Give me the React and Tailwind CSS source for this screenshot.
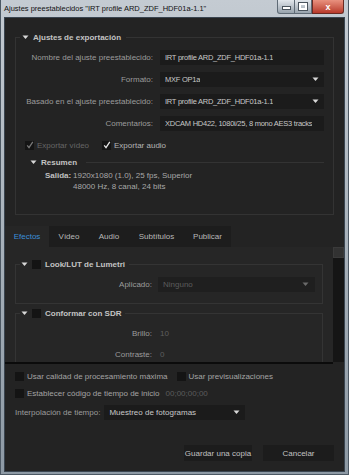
import React from "react";

const Tri = ({ dim }) => (
  <svg width="7" height="5" viewBox="0 0 7 5" className="shrink-0">
    <polygon points="0.5,0.5 6.5,0.5 3.5,4" fill={dim ? "#6a6a6a" : "#d8d8d8"} />
  </svg>
);

const Check = ({ checked, dim }) => (
  <span className="w-[9px] h-[9px] bg-[#141414] flex items-center justify-center shrink-0">
    {checked && (
      <svg width="8" height="8" viewBox="0 0 8 8">
        <path d="M1.2 4.4 L3 6.6 L6.8 0.8" fill="none" stroke={dim ? "#777" : "#e6e6e6"} strokeWidth="1.3" />
      </svg>
    )}
  </span>
);

const Row = ({ label, value, arrow }) => (
  <div className="flex items-center h-[15px] min-w-0">
    <span className="w-[137px] shrink-0 text-right text-[#9c9c9c]">{label}</span>
    <div className="ml-[7px] mr-[9px] flex-1 min-w-0 h-[15px] bg-[#1b1b1b] flex items-center justify-between pl-[5px] pr-[5px] text-[#c8c8c8]">
      <span className="whitespace-nowrap overflow-hidden text-[7.5px] tracking-[-0.25px]">{value}</span>
      {arrow && <Tri />}
    </div>
  </div>
);

const tabs = [
  { name: "Efectos", w: "w-[44px]", active: true },
  { name: "Vídeo", w: "w-[40px]" },
  { name: "Audio", w: "w-[40px]" },
  { name: "Subtítulos", w: "w-[55px]" },
  { name: "Publicar", w: "w-[47px]" },
];

export default function App() {
  return (
    <div className="w-[349px] h-[475px] bg-gradient-to-b from-[#c4cbd2] to-[#8d99a4] border-x border-b border-[#4c5863] flex flex-col font-['Liberation_Sans',Arial,sans-serif] text-[8px] leading-[11px] overflow-hidden">
      {/* title bar */}
      <div className="h-[17px] shrink-0 flex items-start justify-between pl-[3px] pr-[4px]">
        <span className="mt-[4px] text-[7.5px] leading-[10px] text-[#111] whitespace-nowrap">
          Ajustes preestablecidos "IRT profile ARD_ZDF_HDF01a-1.1"
        </span>
        <div className="flex">
          <div className="w-[18px] h-[14px] rounded-bl-[3px] border border-t-0 border-[#5f6b76] bg-gradient-to-b from-[#e2e7ec] to-[#98a3ad] flex items-end justify-center pb-[3px]">
            <span className="w-[7px] h-[2px] bg-white border border-[#4a545d] box-content"></span>
          </div>
          <div className="w-[17px] h-[14px] border-b border-r border-[#5f6b76] bg-gradient-to-b from-[#e2e7ec] to-[#98a3ad] flex items-center justify-center">
            <span className="w-[8px] h-[7px] border-2 border-white outline outline-1 outline-[#4a545d]"></span>
          </div>
          <div className="w-[32px] h-[14px] rounded-br-[3px] border border-t-0 border-[#6b2a22] bg-gradient-to-b from-[#e8917f] to-[#b8382a] flex items-center justify-center text-white font-bold text-[9px] leading-[10px]">
            x
          </div>
        </div>
      </div>

      {/* content */}
      <div className="mx-[3px] mb-[2px] flex-1 min-h-0 bg-[#232323] border border-[#3a4550] flex flex-col text-[#9c9c9c]">
        <div className="pt-[13px] px-[10px]">
          <fieldset className="min-w-0 border border-[#333333] pb-[22px]">
            <legend className="ml-[4px] px-[2px] h-[12px] flex items-center gap-[4px]">
              <Tri />
              <span className="font-bold text-[#c4c4c4] pr-[3px]">Ajustes de exportación</span>
            </legend>
            <div className="mt-[7px] flex flex-col gap-[7px]">
              <Row label="Nombre del ajuste preestablecido:" value="IRT profile ARD_ZDF_HDF01a-1.1" />
              <Row label="Formato:" value="MXF OP1a" arrow />
              <Row label="Basado en el ajuste preestablecido:" value="IRT profile ARD_ZDF_HDF01a-1.1" arrow />
              <Row label="Comentarios:" value="XDCAM HD422, 1080i/25, 8 mono AES3 tracks" />
            </div>
            <div className="mt-[9px] ml-[9px] flex items-center h-[10px]">
              <Check checked dim />
              <span className="ml-[3px] text-[#666]">Exportar vídeo</span>
              <span className="ml-[13px]"><Check checked /></span>
              <span className="ml-[3px] text-[#b4b4b4]">Exportar audio</span>
            </div>
            <div className="mt-[7px] ml-[14px] mr-[9px] flex items-center h-[10px]">
              <Tri />
              <span className="ml-[4px] font-bold text-[#c4c4c4]">Resumen</span>
              <span className="ml-[9px] flex-1 border-t border-[#333333]"></span>
            </div>
            <div className="mt-[3px] ml-[29px] flex">
              <span className="font-bold text-[#c0c0c0] w-[28px]">Salida:</span>
              <div className="text-[#a8a8a8]">
                <div>1920x1080 (1.0), 25 fps, Superior</div>
                <div>48000 Hz, 8 canal, 24 bits</div>
              </div>
            </div>
          </fieldset>
        </div>

        {/* tabs */}
        <div className="mt-[11px] flex h-[21px] shrink-0">
          {tabs.map((t) => (
            <div
              key={t.name}
              className={`${t.w} flex items-center justify-center ${t.active ? "bg-[#262626] text-[#3b8fd8]" : "bg-[#1d1d1d] text-[#b8b8b8]"}`}
            >
              {t.name}
            </div>
          ))}
        </div>

        {/* scroll panel */}
        <div className="flex h-[115px] shrink-0">
          <div className="flex-1 min-w-0 bg-[#262626] overflow-hidden pt-[11px] pl-[10px] pr-[10px]">
            <fieldset className="min-w-0 border border-[#343434] pb-[11px]">
              <legend className="ml-[4px] px-[1px] h-[12px] flex items-center">
                <Tri />
                <span className="ml-[4px]"><Check /></span>
                <span className="ml-[4px] pr-[3px] font-bold text-[#c4c4c4]">Look/LUT de Lumetri</span>
              </legend>
              <div className="mt-[7px] flex items-center h-[15px]">
                <span className="w-[136px] text-right text-[#9c9c9c]">Aplicado:</span>
                <div className="ml-[6px] mr-[7px] flex-1 h-[15px] bg-[#1f1f1f] flex items-center justify-between pl-[5px] pr-[6px] text-[#5c5c5c]">
                  <span>Ninguno</span>
                  <Tri dim />
                </div>
              </div>
            </fieldset>
            <fieldset className="min-w-0 mt-[3px] border border-[#343434] pb-[11px]">
              <legend className="ml-[4px] px-[1px] h-[12px] flex items-center">
                <Tri />
                <span className="ml-[4px]"><Check /></span>
                <span className="ml-[4px] pr-[3px] font-bold text-[#c4c4c4]">Conformar con SDR</span>
              </legend>
              <div className="mt-[9px] flex items-center h-[11px]">
                <span className="w-[136px] text-right text-[#9c9c9c]">Brillo:</span>
                <span className="ml-[8px] text-[#5e5e5e]">10</span>
              </div>
              <div className="mt-[10px] flex items-center h-[11px]">
                <span className="w-[136px] text-right text-[#9c9c9c]">Contraste:</span>
                <span className="ml-[8px] text-[#5e5e5e]">0</span>
              </div>
              <div className="h-[30px]"></div>
            </fieldset>
          </div>
          <div className="w-[11px] bg-[#151515] flex flex-col">
            <div className="h-[11px] bg-[#323232] border border-[#3a3a3a]"></div>
          </div>
        </div>
        <div className="h-[2px] bg-[#0b0b0b] shrink-0 mr-[11px]"></div>

        {/* bottom options */}
        <div className="px-[10px] pt-[7px] flex flex-col">
          <div className="flex items-center h-[10px]">
            <Check />
            <span className="ml-[3px] text-[#a4a4a4]">Usar calidad de procesamiento máxima</span>
            <span className="ml-[9px]"><Check /></span>
            <span className="ml-[3px] text-[#a4a4a4]">Usar previsualizaciones</span>
          </div>
          <div className="mt-[7px] flex items-center h-[10px]">
            <Check />
            <span className="ml-[3px] text-[#a4a4a4]">Establecer código de tiempo de inicio</span>
            <span className="ml-[6px] text-[#5c5c5c]">00;00;00;00</span>
          </div>
          <div className="mt-[7px] flex items-center h-[15px]">
            <span className="text-[#9c9c9c]">Interpolación de tiempo:</span>
            <div className="ml-[4px] w-[141px] h-[15px] bg-[#1b1b1b] flex items-center justify-between pl-[5px] pr-[5px] text-[#c8c8c8]">
              <span>Muestreo de fotogramas</span>
              <Tri />
            </div>
          </div>
          <div className="mt-[25px] flex justify-end gap-[11px]">
            <div className="w-[68px] h-[16px] bg-[#1c1c1c] flex items-center justify-center text-[#c2c2c2]">
              Guardar una copia
            </div>
            <div className="w-[71px] h-[16px] bg-[#1c1c1c] flex items-center justify-center text-[#c2c2c2]">
              Cancelar
            </div>
          </div>
        </div>
      </div>
    </div>
  );
}
